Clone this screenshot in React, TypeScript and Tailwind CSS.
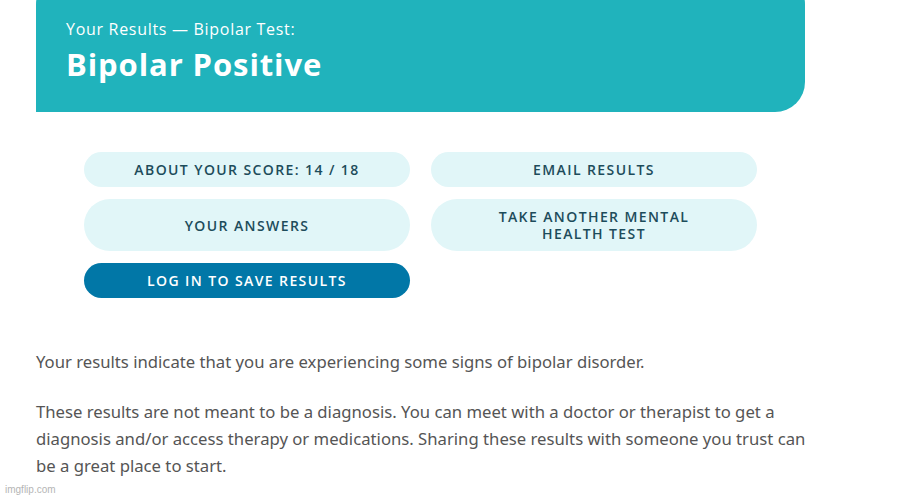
import React from 'react';

const buttons = [
  { label: 'About your score: 14 / 18', tall: false },
  { label: 'Email results', tall: false },
  { label: 'Your answers', tall: true },
  { label: 'Take another mental health test', tall: true },
];

const App: React.FC = () => {
  return (
    <div className="relative w-[897px] h-[500px] overflow-hidden bg-white">
      <div className="w-[769px] ml-[36px]">
        <div className="-mt-[24px] h-[136px] bg-[#20b3bc] rounded-tl-[28px] rounded-tr-[28px] rounded-br-[30px] pl-[30px] pt-[43px] text-white" style={{ fontFamily: '"Open Sans", sans-serif' }}>
          <div className="text-[16px] leading-[20px] font-normal tracking-[0.7px]">Your Results — Bipolar Test:</div>
          <div className="mt-[7px] text-[31px] leading-[36px] font-bold tracking-[0.9px]">Bipolar Positive</div>
        </div>

        <div className="mx-[48px] mt-[40px] grid grid-cols-2 gap-x-[21px] gap-y-[12px]" style={{ fontFamily: '"Open Sans", sans-serif' }}>
          {buttons.map((b) => (
            <div
              key={b.label}
              className={`flex items-center justify-center text-center rounded-full bg-[#e1f6f8] text-[#1d4c5b] uppercase font-semibold text-[14px] leading-[17px] tracking-[1.4px] ${b.tall ? 'h-[52px] px-[50px]' : 'h-[35px]'}`}
            >
              {b.label}
            </div>
          ))}
          <div className="flex items-center justify-center h-[35px] rounded-full bg-[#0177a7] text-white uppercase font-semibold text-[14px] tracking-[1.4px]">
            Log in to save results
          </div>
        </div>

        <div className="mt-[50px] text-[16.7px] leading-[27px] text-[#555555]" style={{ fontFamily: '"Noto Sans", sans-serif' }}>
          <p>Your results indicate that you are experiencing some signs of bipolar disorder.</p>
          <p className="mt-[23px] w-[780px]">
            These results are not meant to be a diagnosis. You can meet with a doctor or therapist to get a diagnosis and/or access therapy or medications. Sharing these results with someone you trust can be a great place to start.
          </p>
        </div>
      </div>

      <div className="absolute left-[5px] bottom-[3px] text-[10px] text-[#b5b5b5]" style={{ fontFamily: '"Liberation Sans", sans-serif' }}>
        imgflip.com
      </div>
    </div>
  );
};

export default App;
